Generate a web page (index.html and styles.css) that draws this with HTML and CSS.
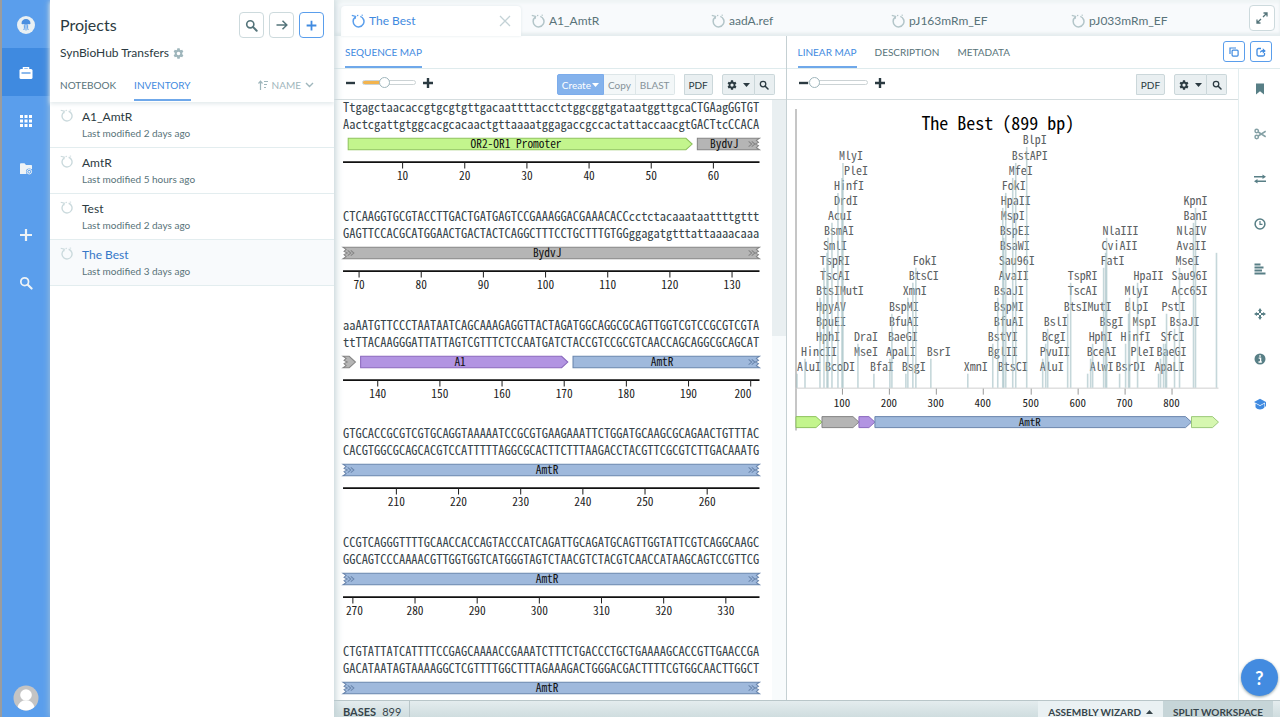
FILE: index.html
```html
<!DOCTYPE html>
<html lang="en">
<head>
<meta charset="utf-8">
<title>The Best</title>
<link rel="stylesheet" href="styles.css">
</head>
<body>
<svg class="defs" aria-hidden="true">
  <symbol id="i-search" viewBox="0 0 16 16"><circle cx="6.5" cy="6.5" r="4.4" fill="none" stroke="currentColor" stroke-width="2"/><path d="M10 10l4.4 4.4" stroke="currentColor" stroke-width="2.4" stroke-linecap="round"/></symbol>
  <symbol id="i-plus" viewBox="0 0 16 16"><path d="M8 2v12M2 8h12" stroke="currentColor" stroke-width="2.2"/></symbol>
  <symbol id="i-gear" viewBox="0 0 16 16"><path fill="currentColor" fill-rule="evenodd" d="M6.300 .5h3.400l.4 2.200 1.200.7 2.100-.8 1.700 2.900-1.700 1.400v2.200l1.700 1.400-1.700 2.900-2.100-.8-1.200.7-.4 2.200H6.300l-.4-2.200-1.200-.7-2.100.8-1.700-2.900 1.700-1.400V6.900L.9 5.500l1.700-2.900 2.100.8 1.200-.7zM8 5.400a2.600 2.600 0 1 0 0 5.200 2.600 2.600 0 0 0 0-5.200z"/></symbol>
  <symbol id="i-plasmid" viewBox="0 0 14 14"><path d="M9.300 2.400A5.400 5.400 0 1 1 4.300 3.200" fill="none" stroke="currentColor" stroke-width="1.500"/><path d="M.8 1.300l3.800 1.100-.6 2.400M6 1.700l1.300-.3" fill="none" stroke="currentColor" stroke-width="1.300"/><path d="M10.500 1.200h1.500" stroke="currentColor"/></symbol>
</svg>

<div class="app">
  <nav class="rail" aria-label="Main">
    <a class="rail-item" href="#home" aria-label="Home"><svg width="18" height="18" viewBox="0 0 18 18"><circle cx="9" cy="9" r="9" fill="#e9f0f3"/><path d="M4.500 7.500C4.500 4.500 6.500 3 9 3s4.500 1.500 4.500 4.500c0 1-2 .8-2.500.5-1 .9-3 .9-4 0-.5.3-2.500.5-2.500-.5z" fill="#4a8fe0"/><path d="M7.500 8.500c-.6 2 .6 3-.7 5.500M9 9v5.500M10.500 8.500c.6 2-.6 3 .7 5.500" fill="none" stroke="#5a9eec"/></svg></a>
    <a class="rail-item active" href="#projects" aria-label="Projects"><svg width="14" height="14" viewBox="0 0 14 14"><path d="M4.500 4V1.700h5V4" fill="none" stroke="#fff" stroke-width="1.500"/><rect x=".5" y="3" width="13" height="10" rx="1.500" fill="#fff"/><path d="M2.500 7h9" stroke="#3f8ae0" stroke-width="1.200"/></svg></a>
    <a class="rail-item" href="#apps" aria-label="Apps"><svg width="14" height="14" viewBox="0 0 14 14" fill="#fff"><path d="M1 1h3v3H1zM5.500 1h3v3h-3zM10 1h3v3h-3zM1 5.500h3v3H1zM5.500 5.500h3v3h-3zM10 5.500h3v3h-3zM1 10h3v3H1zM5.500 10h3v3h-3zM10 10h3v3h-3z"/></svg></a>
    <a class="rail-item" href="#folder" aria-label="Shared folder"><svg width="14" height="14" viewBox="0 0 14 14"><path d="M1 2.500c0-.8.4-1.200 1-1.200h3.500L7 3h5c.7 0 1 .4 1 1v8H1z" fill="#eef3f6"/><circle cx="10.300" cy="9.700" r="3.300" fill="#5a9eec"/><circle cx="10.300" cy="9.700" r="2.300" fill="none" stroke="#eef3f6"/><circle cx="10.300" cy="9.700" r="1" fill="#eef3f6"/></svg></a>
    <a class="rail-item spaced" href="#new" aria-label="New"><svg width="16" height="16"><use href="#i-plus"/></svg></a>
    <a class="rail-item" href="#search" aria-label="Search"><svg width="14" height="14"><use href="#i-search"/></svg></a>
    <a class="avatar" href="#me" aria-label="Account"><svg width="26" height="26" viewBox="0 0 26 26"><circle cx="13" cy="13" r="12.500" fill="#c4c4c4"/><circle cx="13" cy="10" r="5.800" fill="#fff"/><path d="M4.600 22c.8-4 4-6 5.900-6.600h5c1.900.6 5.100 2.600 5.900 6.600A12.500 12.500 0 0 1 13 25.500 12.500 12.500 0 0 1 4.600 22z" fill="#fff"/></svg></a>
  </nav>

  <aside class="projects">
    <header class="projects-head">
      <div class="title-row">
        <h1>Projects</h1>
        <button class="square" aria-label="Search projects"><svg width="13" height="13"><use href="#i-search"/></svg></button>
        <button class="square" aria-label="Go"><svg width="14" height="14" viewBox="0 0 14 14"><path d="M1.500 7h10M7.500 2.800L11.800 7l-4.300 4.200" fill="none" stroke="currentColor" stroke-width="1.500"/></svg></button>
        <button class="square primary" aria-label="Add"><svg width="13" height="13"><use href="#i-plus"/></svg></button>
      </div>
      <h2>SynBioHub Transfers <svg width="11" height="11"><use href="#i-gear"/></svg></h2>
      <div class="side-tabs">
        <a href="#notebook">NOTEBOOK</a>
        <a class="active" href="#inventory">INVENTORY</a>
        <button class="sort"><svg width="10" height="10" viewBox="0 0 10 10"><path d="M2.500 10V1.500M.5 3.500l2-2.300 2 2.300M6 1.500h4M6 4.500h3M6 7.500h2" fill="none" stroke="currentColor" stroke-width="1.200"/></svg>NAME<svg width="9" height="6" viewBox="0 0 9 6"><path d="M1 1l3.500 3.500L8 1" fill="none" stroke="currentColor" stroke-width="1.400"/></svg></button>
      </div>
    </header>
    <ul class="files">
      <li><svg width="13" height="13"><use href="#i-plasmid"/></svg><a href="#a1">A1_AmtR</a><span>Last modified 2 days ago</span></li>
      <li><svg width="13" height="13"><use href="#i-plasmid"/></svg><a href="#amtr">AmtR</a><span>Last modified 5 hours ago</span></li>
      <li><svg width="13" height="13"><use href="#i-plasmid"/></svg><a href="#test">Test</a><span>Last modified 2 days ago</span></li>
      <li class="active"><svg width="13" height="13"><use href="#i-plasmid"/></svg><a href="#best">The Best</a><span>Last modified 3 days ago</span></li>
    </ul>
  </aside>

  <main class="workspace">
    <div class="doc-tabs">
      <div class="doc-tab active"><svg width="14" height="14"><use href="#i-plasmid"/></svg><a href="#t1">The Best</a><button class="close" aria-label="Close tab"><svg width="12" height="12" viewBox="0 0 12 12"><path d="M1 1l10 10M11 1L1 11" stroke="currentColor" stroke-width="1.300"/></svg></button></div>
      <div class="doc-tab"><svg width="14" height="14"><use href="#i-plasmid"/></svg><a href="#t2">A1_AmtR</a></div>
      <div class="doc-tab"><svg width="14" height="14"><use href="#i-plasmid"/></svg><a href="#t3">aadA.ref</a></div>
      <div class="doc-tab"><svg width="14" height="14"><use href="#i-plasmid"/></svg><a href="#t4">pJ163mRm_EF</a></div>
      <div class="doc-tab"><svg width="14" height="14"><use href="#i-plasmid"/></svg><a href="#t5">pJ033mRm_EF</a></div>
      <button class="square expand" aria-label="Expand"><svg width="12" height="12" viewBox="0 0 12 12"><path d="M7 5l4-4M7.500 1H11v3.500M5 7l-4 4M1 7.500V11h3.500" fill="none" stroke="currentColor" stroke-width="1.300"/></svg></button>
    </div>

    <div class="panes">
      <section class="pane left-pane">
        <div class="view-tabs"><a class="active" href="#seq">SEQUENCE MAP</a></div>
        <div class="toolbar">
          <span class="zoom"><button aria-label="Zoom out"><svg width="9" height="10" viewBox="0 0 9 10"><path d="M0 5h9" stroke="currentColor" stroke-width="2.400"/></svg></button><input class="slider filled" type="range" min="0" max="100" value="40" aria-label="Sequence zoom"><button aria-label="Zoom in"><svg width="10" height="10" viewBox="0 0 10 10"><path d="M0 5h10M5 0v10" stroke="currentColor" stroke-width="2.400"/></svg></button></span>
          <span class="group muted"><button class="create">Create<svg width="7" height="4" viewBox="0 0 7 4"><path d="M0 0h7L3.500 4z" fill="currentColor"/></svg></button><button>Copy</button><button>BLAST</button></span>
          <span class="group"><button class="pdf">PDF</button></span>
          <span class="group"><button class="gear" aria-label="Settings"><svg width="10" height="10"><use href="#i-gear"/></svg><svg width="7" height="4" viewBox="0 0 7 4"><path d="M0 0h7L3.500 4z" fill="currentColor"/></svg></button><button class="find" aria-label="Find"><svg width="10" height="10"><use href="#i-search"/></svg></button></span>
        </div>
        <div class="seq-scroll">
          <div class="seq-rows" id="seq-rows"></div>
          <div class="scroll-track"><div class="scroll-thumb"></div></div>
        </div>
      </section>

      <section class="pane right-pane">
        <div class="view-tabs">
          <a class="active" href="#linear">LINEAR MAP</a><a href="#description">DESCRIPTION</a><a href="#metadata">METADATA</a>
          <span class="view-actions">
            <button class="outline" aria-label="Copy"><svg width="10" height="10" viewBox="0 0 10 10"><path d="M1 7V1h6" fill="none" stroke="currentColor" stroke-width="1.200"/><rect x="3.100" y="3.100" width="6" height="6" rx="1" fill="none" stroke="currentColor" stroke-width="1.200"/></svg></button>
            <button class="outline" aria-label="Share"><svg width="10" height="10" viewBox="0 0 10 10"><path d="M5 1.500H2.500a1.500 1.500 0 0 0-1.500 1.500v4.500A1.500 1.500 0 0 0 2.500 9H7a1.500 1.500 0 0 0 1.500-1.500V6" fill="none" stroke="currentColor" stroke-width="1.300"/><path d="M4 6c0-2.200 1-3 2.800-3V1.200L9.800 4l-3 2.500V4.700C5.500 4.700 4.700 5 4 6z" fill="currentColor"/></svg></button>
          </span>
        </div>
        <div class="right-body">
          <div class="linear">
            <div class="toolbar">
              <span class="zoom"><button aria-label="Zoom out"><svg width="9" height="10" viewBox="0 0 9 10"><path d="M0 5h9" stroke="currentColor" stroke-width="2.400"/></svg></button><input class="slider" type="range" min="0" max="100" value="0" aria-label="Map zoom"><button aria-label="Zoom in"><svg width="10" height="10" viewBox="0 0 10 10"><path d="M0 5h10M5 0v10" stroke="currentColor" stroke-width="2.400"/></svg></button></span>
              <span class="group"><button class="pdf">PDF</button></span>
              <span class="group"><button class="gear" aria-label="Settings"><svg width="10" height="10"><use href="#i-gear"/></svg><svg width="7" height="4" viewBox="0 0 7 4"><path d="M0 0h7L3.500 4z" fill="currentColor"/></svg></button><button class="find" aria-label="Find"><svg width="10" height="10"><use href="#i-search"/></svg></button></span>
            </div>
            <div class="map-wrap"><svg id="linear-map" class="linear-map" viewBox="0 0 425 325" role="img" aria-label="Linear map"></svg></div>
          </div>
          <nav class="tools" aria-label="Tools">
            <a href="#bookmark" aria-label="Bookmark"><svg width="12" height="12" viewBox="0 0 12 12"><path d="M2 .5h8v11L6 8.200 2 11.500z" fill="currentColor"/></svg></a>
            <a class="soft" href="#cut" aria-label="Cut"><svg width="12" height="12" viewBox="0 0 12 12" fill="none" stroke="currentColor" stroke-width="1.500"><circle cx="2.700" cy="3" r="1.700"/><circle cx="2.700" cy="9" r="1.700"/><path d="M4.200 4l7.500 4.800M4.200 8l7.500-4.800"/></svg></a>
            <a href="#swap" aria-label="Align"><svg width="12" height="12" viewBox="0 0 12 12"><path d="M0 3.800h10M2 8.200h10" stroke="currentColor" stroke-width="1.600"/><path d="M8.500 1.600L12 3.800 8.500 6zM3.500 6L0 8.200l3.500 2.200z" fill="currentColor"/></svg></a>
            <a href="#history" aria-label="History"><svg width="12" height="12" viewBox="0 0 12 12" fill="none" stroke="currentColor"><circle cx="6" cy="6" r="4.900" stroke-width="1.500"/><path d="M6 3v3.300h2.500" stroke-width="1.200"/></svg></a>
            <a href="#list" aria-label="Features"><svg width="12" height="12" viewBox="0 0 12 12"><path d="M.5 1.500h6M.5 4.500h9M.5 7.500h7.500M.5 10.500h11" stroke="currentColor" stroke-width="1.900"/></svg></a>
            <a href="#target" aria-label="Target"><svg width="12" height="12" viewBox="0 0 12 12"><path d="M6 0l2 3H4zM6 12l2-3H4zM0 6l3-2v4zM12 6L9 4v4z" fill="currentColor"/><path d="M6 2v3M6 7v3M2 6h3M7 6h3" stroke="currentColor" stroke-width="2"/></svg></a>
            <a href="#info" aria-label="Information"><svg width="12" height="12" viewBox="0 0 12 12"><circle cx="6" cy="6" r="5.500" fill="currentColor"/><path d="M4.700 5.200h1.900V9M4.500 9h3.300M5.300 3h1.500" fill="none" stroke="#fff" stroke-width="1.300"/></svg></a>
            <a class="active" href="#learn" aria-label="Learn"><svg width="12" height="12" viewBox="0 0 12 12"><path d="M6 .8l6 3.200-6 3.200L0 4zM1.500 5.600L6 8.100l4.500-2.500v3.600C9.500 10.700 7.500 11.400 6 11.400s-3.500-.7-4.500-2.200z" fill="currentColor"/><path d="M11.500 4v4.500" stroke="currentColor"/></svg></a>
            <button class="help" aria-label="Help">?</button>
          </nav>
        </div>
      </section>
    </div>

    <footer class="status">
      <span class="bases"><b>BASES</b><span>899</span></span>
      <button class="wizard">ASSEMBLY WIZARD <svg width="7" height="4" viewBox="0 0 7 4"><path d="M0 4h7L3.500 0z" fill="currentColor"/></svg></button>
      <button class="split">SPLIT WORKSPACE</button>
    </footer>
  </main>
</div>
<script src="app.js"></script>
</body>
</html>
```
FILE: styles.css
```css
* { box-sizing: border-box; }
body {
  margin: 0;
  font-family: "Lato", "Liberation Sans", sans-serif;
  font-size: 12px;
  line-height: 16px;
  color: #2b3a41;
  background: #fff;
}
a { color: inherit; text-decoration: none; }
button {
  font: inherit;
  color: inherit;
  margin: 0;
  padding: 0;
  border: 0;
  background: none;
}
h1, h2, ul { margin: 0; padding: 0; font-weight: 400; }
svg { display: block; flex: none; }
.defs { position: absolute; width: 0; height: 0; }

.app { display: flex; height: 100vh; overflow: hidden; }

/* blue navigation rail */
.rail {
  flex: none;
  width: 50px;
  display: flex;
  flex-direction: column;
  background: #5a9eec;
  border-left: 2px solid #9a9c9e;
  color: #eef3f6;
}
.rail-item { height: 48px; display: flex; align-items: center; justify-content: center; padding-top: 2px; }
.rail-item.active { background: #3f8ae0; }
.rail-item.spaced { margin-top: 18px; }
.avatar { margin: auto auto 6px; }

/* project list */
.projects {
  flex: none;
  width: 284px;
  background: #fff;
  box-shadow: 1px 0 8px #b9cbcf;
  z-index: 1;
}
.projects-head { padding: 12px 10px 0; box-shadow: 0 2px 4px #e3eaec; height: 102px; }
.title-row { display: flex; align-items: center; gap: 5px; height: 26px; }
.title-row h1 { flex: 1; font-size: 16px; line-height: 20px; }
.square {
  width: 26px;
  height: 26px;
  display: flex;
  align-items: center;
  justify-content: center;
  border: 1px solid #cddadd;
  border-radius: 4px;
  background: #fff;
  color: #54747a;
}
.title-row .square { width: 25px; }
.square.primary { border-color: #5a9eec; color: #3f8ae0; }
.projects h2 { display: flex; align-items: center; gap: 4px; margin-top: 7px; font-size: 12px; line-height: 16px; }
.projects h2 svg { color: #9fb6bc; }
.side-tabs { display: flex; gap: 18px; margin-top: 16px; height: 24px; font-size: 10px; color: #587379; }
.side-tabs a.active { color: #3f8ae0; border-bottom: 2px solid #6fa8ea; }
.sort { margin: 0 10px 0 auto; display: flex; align-items: center; gap: 4px; height: 16px; color: #9fb6bc; }
.files { list-style: none; }
.files li {
  display: grid;
  grid-template-columns: 22px 1fr;
  padding: 7px 10px 6px;
  border-bottom: 1px solid #e3edef;
}
.files li svg { color: #cbdadd; }
.files li.active { background: #f8fafc; }
.files li.active a { color: #3577c8; }
.files span { grid-column: 2; font-size: 10px; color: #587379; }

/* open documents */
.workspace { flex: 1; min-width: 0; display: flex; flex-direction: column; }
.doc-tabs {
  flex: none;
  height: 36px;
  display: flex;
  padding: 6px 5px 0 7px;
  background: #f8fafc;
  box-shadow: inset 0 -3px 3px #e6edef, inset 0 3px 3px #eff4f5;
}
.doc-tab { flex: 0 1 180px; display: flex; align-items: center; gap: 4px; padding: 0 10px; color: #587379; }
.doc-tab svg { color: #b3c5c9; }
.doc-tab.active { background: #fff; border-radius: 4px 4px 0 0; color: #3f8ae0; box-shadow: 0 0 3px #dfe8ea; }
.doc-tab.active svg { color: #5a9eec; }
.close { margin-left: auto; }
.doc-tab .close svg { color: #c3d2d6; }
.expand { margin: -1px 0 0 auto; }

.panes { flex: 1; min-height: 0; display: flex; }
.pane { display: flex; flex-direction: column; min-width: 0; }
.left-pane { flex: 452 1 0; border-right: 1px solid #c5d0d3; }
.right-pane { flex: 494 1 0; }
.view-tabs {
  flex: none;
  display: flex;
  gap: 18px;
  height: 33px;
  padding: 8px 8px 0 11px;
  border-bottom: 1px solid #dfebed;
  font-size: 10px;
  color: #587379;
}
.view-tabs a.active { color: #3f8ae0; border-bottom: 2px solid #6fa8ea; }
.view-actions { display: flex; gap: 5px; margin: -3px 0 0 auto; }
.outline {
  width: 22px;
  height: 21px;
  display: flex;
  align-items: center;
  justify-content: center;
  border: 1px solid #5a9eec;
  border-radius: 3px;
  color: #3f8ae0;
}
.toolbar {
  flex: none;
  display: flex;
  gap: 9px;
  height: 31px;
  padding: 5px 11px 0 12px;
  border-bottom: 1px solid #d5dddf;
  font-size: 10px;
}
.zoom { display: flex; align-items: center; gap: 7px; height: 17px; margin-right: auto; }
.slider { appearance: none; width: 54px; height: 10px; margin: 0; background: none; }
.right-pane .slider { width: 60px; }
.right-pane .zoom { gap: 0; }
.right-pane .zoom button:last-child { margin-left: 7px; }
.slider::-webkit-slider-runnable-track {
  height: 5px;
  border: 1px solid #ccd3d5;
  border-radius: 3px;
  background: #fff;
}
.slider.filled::-webkit-slider-runnable-track { background: linear-gradient(90deg, #f3b44e 40%, #fff 40%); }
.slider::-webkit-slider-thumb {
  appearance: none;
  width: 11px;
  height: 11px;
  margin-top: -4px;
  border: 1px solid #9fb6bc;
  border-radius: 50%;
  background: #fff;
}
.group { display: flex; height: 21px; }
.group button {
  display: flex;
  align-items: center;
  justify-content: center;
  gap: 1px;
  padding: 0 4px;
  background: #e9eff1;
  border: 1px solid #cbd7da;
}
.group button:first-child { border-radius: 2px 0 0 2px; }
.group button:last-child { border-radius: 0 2px 2px 0; }
.group button + button { border-left: 0; }
.group.muted button { background: #f3f7f8; color: #869298; border-color: #dde6e8; }
.group.muted .create { background: #84b2ec; border-color: #7caceb; color: #fff; }
.group .pdf { width: 29px; padding: 0; }
.group .gear { width: 33px; gap: 6px; padding: 0; }
.group .find { width: 20px; padding: 0; }

/* sequence rows */
.seq-scroll { flex: 1; min-height: 0; display: flex; overflow: hidden; }
.seq-rows { flex: 1; min-width: 0; padding: 0 12px 0 9px; }
.seq-row { width: 100%; height: auto; overflow: visible; }
.scroll-track { flex: none; width: 14px; background: #f8fbfc; }
.scroll-thumb { height: 236px; background: #e9eff1; }
.mono { font-family: "Noto Sans Mono CJK JP", "Noto Sans Mono CJK SC", "DejaVu Sans Mono", monospace; fill: #36444a; }
.bases-text { font-size: 12px; white-space: pre; }
.feature-name { font-size: 11px; fill: #111; text-anchor: middle; }
.tick-name { font-size: 11px; fill: #222; text-anchor: middle; }
.site-name { font-size: 12px; fill: #5c6163; }
.map-title { font-size: 18px; fill: #000; text-anchor: middle; }

/* linear map and tool strip */
.right-body { flex: 1; min-height: 0; display: flex; }
.linear { flex: 1; min-width: 0; }
.map-wrap { padding: 9px 19px 0 8px; }
.linear-map { width: 100%; height: auto; overflow: visible; }
.tools {
  flex: none;
  width: 42px;
  display: flex;
  flex-direction: column;
  align-items: center;
  gap: 33px;
  padding: 14px 0 4px;
  border-left: 1px solid #e3edef;
  color: #587f86;
}
.tools .soft { color: #84a0a5; }
.tools .active { color: #3f8ae0; }
.help {
  margin-top: auto;
  width: 37px;
  height: 37px;
  flex: none;
  border-radius: 50%;
  background: #438be0;
  box-shadow: 0 1px 3px #8a9da3;
  color: #fff;
  font-size: 18px;
  font-weight: 700;
}

.status {
  flex: none;
  height: 17px;
  display: flex;
  overflow: hidden;
  padding-right: 7px;
  border-top: 1px solid #b9c6c9;
  background: linear-gradient(#e4ecee, #cfdddf);
  font-size: 10px;
  line-height: 22px;
  color: #36444a;
}
.status > * { height: 22px; }
.bases { display: flex; gap: 6px; padding: 0 8px 0 9px; border-right: 1px solid #b9c6c9; margin-right: auto; font-size: 11px; }
.wizard, .split { font-weight: 700; padding: 0 10px; }
.wizard { display: flex; align-items: center; gap: 5px; background: #eaf1f3; }
.split { background: #c6d5d8; }
```
FILE: app.js
```js
const NS = "http://www.w3.org/2000/svg";
function add(parent, tag, attrs, text) {
  const node = document.createElementNS(NS, tag);
  for (const key in attrs) node.setAttribute(key, attrs[key]);
  if (text) node.textContent = text;
  parent.appendChild(node);
  return node;
}

const COLORS = {
  green: ["#c3f58d", "#8fc35e"],
  lime: ["#d6f7b0", "#9cc97a"],
  gray: ["#b5b5b5", "#858585"],
  purple: ["#b294e2", "#8a68bd"],
  blue: ["#9fb9dc", "#6a86ad"]
};

const BASE = 6;
const PER_ROW = 67;
const ROW_WIDTH = BASE * PER_ROW;

const rows = [
  ["TtgagctaacaccgtgcgtgttgacaattttacctctggcggtgataatggttgcaCTGAagGGTGT", "AactcgattgtggcacgcacaactgttaaaatggagaccgccactattaccaacgtGACTtcCCACA",
    [["green", 5, 337, "OR2-OR1 Promoter", "arrow"], ["gray", 342, 402, "BydvJ", "out"]]],
  ["CTCAAGGTGCGTACCTTGACTGATGAGTCCGAAAGGACGAAACACCcctctacaaataattttgttt", "GAGTTCCACGCATGGAACTGACTACTCAGGCTTTCCTGCTTTGTGGggagatgtttattaaaacaaa",
    [["gray", 0, 402, "BydvJ", "both"]]],
  ["aaAATGTTCCCTAATAATCAGCAAAGAGGTTACTAGATGGCAGGCGCAGTTGGTCGTCCGCGTCGTA", "ttTTACAAGGGATTATTAGTCGTTTCTCCAATGATCTACCGTCCGCGTCAACCAGCAGGCGCAGCAT",
    [["gray", 0, 12, "", "tail"], ["purple", 17, 217, "A1", "arrow"], ["blue", 222, 402, "AmtR", "out"]]],
  ["GTGCACCGCGTCGTGCAGGTAAAAATCCGCGTGAAGAAATTCTGGATGCAAGCGCAGAACTGTTTAC", "CACGTGGCGCAGCACGTCCATTTTTAGGCGCACTTCTTTAAGACCTACGTTCGCGTCTTGACAAATG",
    [["blue", 0, 402, "AmtR", "both"]]],
  ["CCGTCAGGGTTTTGCAACCACCAGTACCCATCAGATTGCAGATGCAGTTGGTATTCGTCAGGCAAGC", "GGCAGTCCCAAAACGTTGGTGGTCATGGGTAGTCTAACGTCTACGTCAACCATAAGCAGTCCGTTCG",
    [["blue", 0, 402, "AmtR", "both"]]],
  ["CTGTATTATCATTTTCCGAGCAAAACCGAAATCTTTCTGACCCTGCTGAAAAGCACCGTTGAACCGA", "GACATAATAGTAAAAGGCTCGTTTTGGCTTTAGAAAGACTGGGACGACTTTTCGTGGCAACTTGGCT",
    [["blue", 0, 402, "AmtR", "both"]]]
];

function featurePath(x1, x2, top, bottom, kind) {
  const mid = (top + bottom) / 2;
  const tornLeft = kind === "both" || kind === "tail";
  const tornRight = kind === "both" || kind === "out";
  let d = `M${x1} ${top}`;
  if (tornRight) d += `H${x2}l-3 2l2 2l-3 1.500l3 1.500l-2 2l3 2`;
  else d += `H${x2 - 6}L${x2} ${mid}L${x2 - 6} ${bottom}`;
  d += `H${x1}`;
  if (tornLeft) d += `l3 -2l-2 -2l3 -1.500l-3 -1.500l2 -2z`;
  return d + "z";
}

const holder = document.getElementById("seq-rows");
rows.forEach(([forward, reverse, features], i) => {
  const svg = add(holder, "svg", { class: "seq-row", viewBox: `0 0 ${ROW_WIDTH} 105` });
  add(svg, "text", { class: "mono bases-text", x: 0, y: 12 }, forward);
  add(svg, "text", { class: "mono bases-text", x: 0, y: 28 }, reverse);
  for (const [color, x1, x2, name, kind] of features) {
    const [fill, stroke] = COLORS[color];
    add(svg, "path", { d: featurePath(x1, x2, 37, 48, kind), fill, stroke });
    const chevron = x => add(svg, "path", { d: `M${x} 40l3 2.500l-3 2.500M${x + 3} 40l3 2.500l-3 2.500`, fill: "none", stroke });
    if (kind === "both") chevron(4.5);
    if (kind === "both" || kind === "out") chevron(391.5);
    if (name) add(svg, "text", { class: "mono feature-name", x: (x1 + x2) / 2 - 4, y: 46 }, name);
  }
  add(svg, "path", { d: `M0 60H${ROW_WIDTH}`, stroke: "#111", "stroke-width": 1.6 });
  const first = i * PER_ROW;
  for (let n = Math.ceil((first + 1) / 10) * 10; n <= first + PER_ROW; n += 10) {
    const x = (n - first) * BASE - 2.5;
    add(svg, "path", { d: `M${x} 60v6`, stroke: "#222" });
    add(svg, "text", { class: "mono tick-name", x: Math.min(386, Math.max(11, x)), y: 77 }, String(n));
  }
});

/* restriction sites: [x, name] by level, lowest first */
const levels = [
  [[2, "AluI"], [30, "BcoDI"], [75, "BfaI"], [107, "BsgI"], [169, "XmnI"], [203, "BtsCI"], [245, "AluI"], [295, "AlwI"], [321, "BsrDI"], [360, "ApaLI"]],
  [[6, "HincII"], [59, "MseI"], [91, "ApaLI"], [132, "BsrI"], [193, "BglII"], [245, "PvuII"], [292, "BceAI"], [336, "PleI"], [362, "BaeGI"]],
  [[21, "HphI"], [59, "DraI"], [93, "BaeGI"], [193, "BstYI"], [247, "BcgI"], [294, "HphI"], [326, "HinfI"], [366, "SfcI"]],
  [[21, "BpuEI"], [94, "BfuAI"], [199, "BfuAI"], [249, "BslI"], [305, "BsgI"], [338, "MspI"], [375, "BsaJI"]],
  [[21, "HpyAV"], [94, "BspMI"], [199, "BspMI"], [269, "BtsIMutI"], [330, "BlpI"], [367, "PstI"]],
  [[21, "BtsIMutI"], [108, "XmnI"], [199, "BsaJI"], [273, "TscAI"], [330, "MlyI"], [377, "Acc65I"]],
  [[25, "TscAI"], [114, "BtsCI"], [204, "AvaII"], [273, "TspRI"], [339, "HpaII"], [377, "Sau96I"]],
  [[25, "TspRI"], [118, "FokI"], [204, "Sau96I"], [306, "FatI"], [381, "MseI"]],
  [[28, "SmlI"], [205, "BsaWI"], [307, "CviAII"], [382, "AvaII"]],
  [[29, "BsmAI"], [205, "BspEI"], [308, "NlaIII"], [382, "NlaIV"]],
  [[33, "AcuI"], [206, "MspI"], [389, "BanI"]],
  [[39, "DrdI"], [206, "HpaII"], [389, "KpnI"]],
  [[39, "HinfI"], [207, "FokI"]],
  [[49, "PleI"], [214, "MfeI"]],
  [[44, "MlyI"], [217, "BstAPI"]],
  [[228, "BlpI"]]
];
/* cut positions: [x, level the line rises to] */
const cuts = [
  [2, 0], [10, 1], [25, 5], [29, 7], [32, 8], [33, 9], [37, 10], [43, 12], [47, 13], [48, 14], [63, 2], [79, 0], [95, 1], [97, 4],
  [111, 0], [113, 5], [118, 6], [121, 7], [136, 1], [173, 0], [198, 2], [203, 5], [208, 11], [209, 9], [211, 12], [218, 13], [221, 14], [232, 15],
  [248, 1], [251, 2], [253, 3], [273, 4], [276, 6], [293, 0], [296, 1], [298, 2], [309, 7], [311, 8], [312, 9], [325, 0], [331, 2], [334, 4], [335, 5],
  [343, 6], [364, 0], [366, 1], [369, 2], [371, 2], [372, 4], [380, 3], [385, 7], [399, 10], [401, 11], [422, 8]
];
const map = document.getElementById("linear-map");
add(map, "path", { d: "M1 0V322", stroke: "#c6c6c6", "stroke-width": 2 });
add(map, "path", { d: "M0 279.5H424", stroke: "#cfcfcf" });
add(map, "text", { class: "mono map-title", x: 203, y: 21 }, "The Best (899 bp)");
levels.forEach((sites, level) => sites.forEach(([x, name]) =>
  add(map, "text", { class: "mono site-name", x, y: 262 - Math.round(level * 15.1) }, name)));
for (const [x, level] of cuts)
  add(map, "path", { d: `M${x} ${265 - Math.round(level * 15.1)}V279`, stroke: "#9fbcc2", "stroke-width": 1.6, "stroke-opacity": 0.6 });
for (let n = 1; n <= 8; n++) {
  const x = Math.round(n * 47.1);
  add(map, "path", { d: `M${x}.5 280v6`, stroke: "#999" });
  add(map, "text", { class: "mono tick-name", x, y: 298 }, String(n * 100));
}
for (const [color, x1, x2] of [["green", 1, 27], ["gray", 27, 64], ["purple", 64, 80], ["blue", 80, 397], ["lime", 397, 424]]) {
  const [fill, stroke] = COLORS[color];
  add(map, "path", { d: featurePath(x1, x2, 308, 319, "arrow"), fill, stroke });
}
add(map, "text", { class: "mono feature-name", x: 235, y: 317 }, "AmtR");
```
